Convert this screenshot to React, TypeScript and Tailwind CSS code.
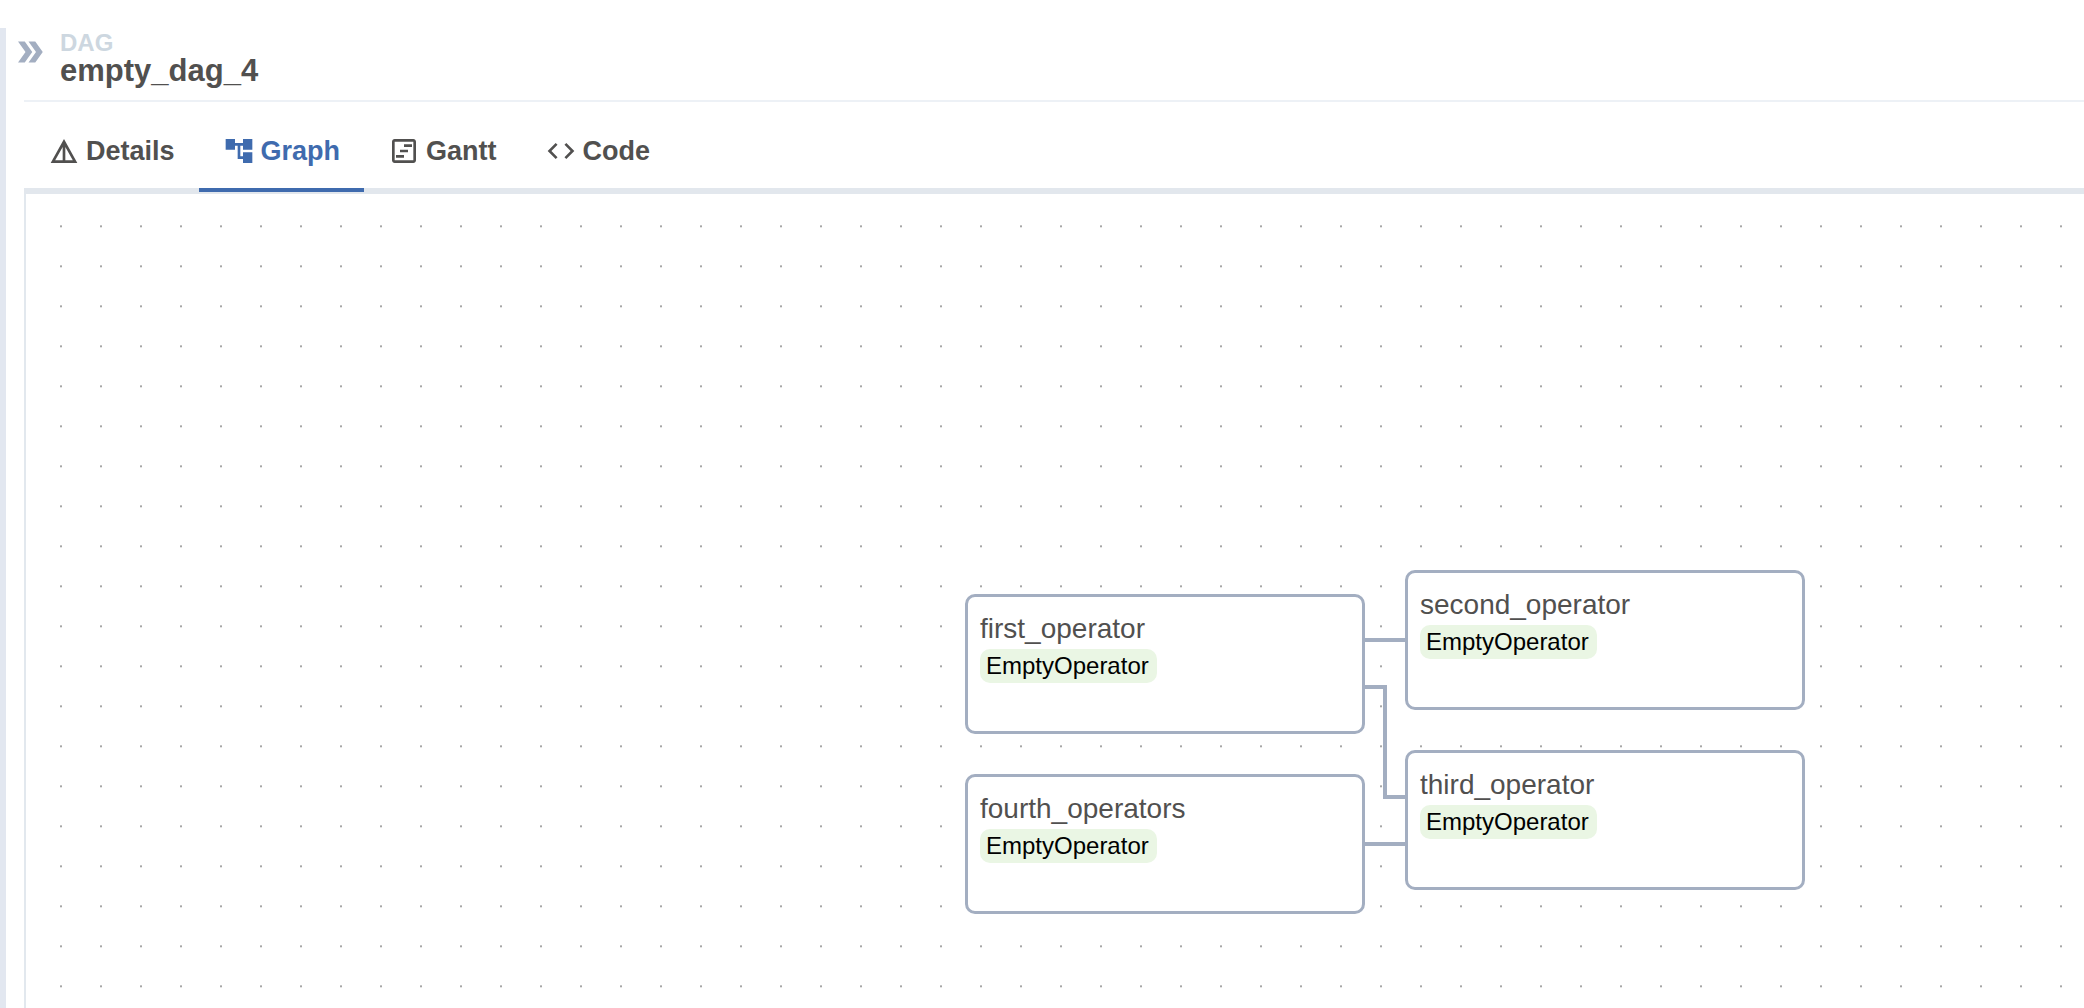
import type { ReactNode } from "react";
import {
  MdAccountTree,
  MdCode,
  MdDetails,
  MdDoubleArrow,
  MdOutlineViewTimeline,
} from "react-icons/md";

function Tab({ icon, label, active = false }: { icon: ReactNode; label: string; active?: boolean }) {
  return (
    <button
      type="button"
      role="tab"
      aria-selected={active}
      className={
        active
          ? "flex h-20 items-center gap-1.5 border-b-4 border-[#3f6bae] px-6 pt-0.5 text-[#3f6bae]"
          : "flex h-20 items-center gap-1.5 border-b-4 border-transparent px-6 pt-0.5"
      }
    >
      {icon}
      <span>{label}</span>
    </button>
  );
}

const nodes = [
  { name: "first_operator", place: "left-[939px] top-[400px]" },
  { name: "second_operator", place: "left-[1379px] top-[376px]" },
  { name: "third_operator", place: "left-[1379px] top-[556px]" },
  { name: "fourth_operators", place: "left-[939px] top-[580px]" },
];

function GraphCanvas() {
  return (
    <section aria-label="Graph" className="relative flex-1 overflow-hidden border-l-2 border-[#e2e8ee]">
      <svg className="absolute inset-0 h-full w-full" aria-hidden="true">
        <defs>
          <pattern id="dots" x="34" y="31" width="40" height="40" patternUnits="userSpaceOnUse">
            <rect width="2" height="1" fill="#c4c4c4" />
            <rect y="1" width="2" height="1" fill="#a6a6a6" />
            <rect y="2" width="2" height="1" fill="#e4e4e4" />
          </pattern>
        </defs>
        <rect width="100%" height="100%" fill="url(#dots)" />
        <g fill="none" stroke="#a3aec1" strokeWidth="4">
          <path d="M1338 446H1380" />
          <path d="M1338 493H1359V603H1380" />
          <path d="M1338 650H1380" />
        </g>
      </svg>
      {nodes.map((n) => (
        <article
          key={n.name}
          className={`absolute ${n.place} flex h-[140px] w-[400px] flex-col items-start rounded-[10px] border-3 border-[#a3aec1] bg-white px-3 pt-3.5`}
        >
          <h2 className="text-[28px] leading-9">{n.name}</h2>
          <span className="mt-0.5 rounded-[10px] bg-[#eaf6e4] pr-2 pl-1.5 text-2xl leading-[34px] text-black">
            EmptyOperator
          </span>
        </article>
      ))}
    </section>
  );
}

export default function App() {
  return (
    <div className="flex min-h-screen bg-white pt-7 font-['Liberation_Sans',Arial,sans-serif] text-[#51504f]">
      <div className="w-1.5 shrink-0 bg-[#e2e7f0]" />
      <main className="flex min-w-0 flex-1 flex-col">
        <header className="flex h-[74px] shrink-0">
          <button type="button" aria-label="Expand grid" className="ml-1.5 h-12 text-[#a3aec1]">
            <MdDoubleArrow size={36} />
          </button>
          <div className="ml-3 pt-0.5 font-bold">
            <p className="text-2xl leading-[26px] text-[#cdd7e0]">DAG</p>
            <h1 className="text-[31px] leading-[30px]">empty_dag_4</h1>
          </div>
        </header>
        <div className="ml-[18px] flex flex-1 flex-col">
          <div className="-mt-0.5 h-0.5 bg-[#edf1f6]" />
          <nav
            role="tablist"
            aria-label="Views"
            className="mt-2.5 flex border-b-6 border-[#e2e7ed] text-[27px] font-bold"
          >
            <div className="-mb-1 flex">
              <Tab icon={<MdDetails size={32} />} label="Details" />
              <Tab icon={<MdAccountTree size={32} />} label="Graph" active />
              <Tab icon={<MdOutlineViewTimeline size={32} />} label="Gantt" />
              <Tab icon={<MdCode size={32} />} label="Code" />
            </div>
          </nav>
          <GraphCanvas />
        </div>
      </main>
    </div>
  );
}
